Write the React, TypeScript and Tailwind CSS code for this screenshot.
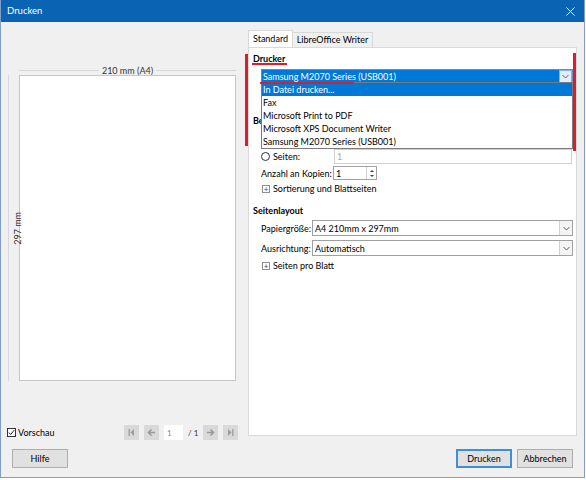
import React from "react";

const font = "font-['Lato','Noto_Sans',sans-serif]";

function Chevron({ className = "" }: { className?: string }) {
  return (
    <svg width="7" height="5" viewBox="0 0 7 5" className={className}>
      <path d="M0.5 1 L3.5 4 L6.5 1" fill="none" stroke="#606060" strokeWidth="1" />
    </svg>
  );
}

function Select({ value, width }: { value: string; width: string }) {
  return (
    <div className={`flex h-[16px] ${width} items-center border border-[#a0a0a0] bg-white`}>
      <span className="flex-1 truncate pl-[2px] leading-none">{value}</span>
      <div className="flex h-full w-[13px] items-center justify-center border-l border-[#d0d0d0] bg-[#f4f4f4]">
        <Chevron />
      </div>
    </div>
  );
}

function Expander({ label }: { label: string }) {
  return (
    <div className="flex items-center gap-[3px]">
      <div className="flex h-[8px] w-[8px] items-center justify-center border border-[#909090] bg-white">
        <span className="text-[8px] leading-none text-[#404040]">+</span>
      </div>
      <span className="leading-none">{label}</span>
    </div>
  );
}

function NavButton({ kind }: { kind: "first" | "prev" | "next" | "last" }) {
  return (
    <div className="flex h-[15px] w-[15px] items-center justify-center bg-[#d9d9d9]">
      <svg width="9" height="9" viewBox="0 0 9 9">
        {kind === "first" && (
          <>
            <rect x="1.5" y="1" width="1.3" height="7" fill="#9a9a9a" />
            <path d="M7 1 L3.5 4.5 L7 8 Z" fill="#9a9a9a" />
          </>
        )}
        {kind === "last" && (
          <>
            <rect x="6.2" y="1" width="1.3" height="7" fill="#9a9a9a" />
            <path d="M2 1 L5.5 4.5 L2 8 Z" fill="#9a9a9a" />
          </>
        )}
        {kind === "prev" && (
          <path d="M8 4.5 H1.5 M4.5 1.5 L1.5 4.5 L4.5 7.5" fill="none" stroke="#9a9a9a" strokeWidth="1.6" />
        )}
        {kind === "next" && (
          <path d="M1 4.5 H7.5 M4.5 1.5 L7.5 4.5 L4.5 7.5" fill="none" stroke="#9a9a9a" strokeWidth="1.6" />
        )}
      </svg>
    </div>
  );
}

export default function App() {
  const printers = [
    "In Datei drucken...",
    "Fax",
    "Microsoft Print to PDF",
    "Microsoft XPS Document Writer",
    "Samsung M2070 Series (USB001)",
  ];

  return (
    <div className={`h-[480px] w-[586px] whitespace-nowrap bg-white text-[9px] text-black ${font}`}>
      <div className="flex h-[478px] w-[585px] flex-col border-x border-b border-[#7f9fc9]">
        {/* title bar */}
        <div className="flex h-[22px] items-center justify-between bg-[#0a63b3] pl-[6px] pr-[9px] text-white">
          <span className="text-[9.5px]">Drucken</span>
          <svg width="9" height="9" viewBox="0 0 9 9">
            <path d="M0.5 0.5 L8.5 8.5 M8.5 0.5 L0.5 8.5" stroke="#fff" strokeWidth="1" />
          </svg>
        </div>

        <div className="flex flex-1 flex-col bg-[#f0f0f0]">
          <div className="flex h-[418px]">
            {/* preview column */}
            <div className="flex w-[247px] flex-col pt-[43px]">
              <div className="ml-[18px] flex h-[10px] w-[217px] items-center">
                <div className="h-px flex-1 bg-[#d8d8d8]" />
                <span className="px-[3px] leading-none text-[#333]">210 mm (A4)</span>
                <div className="h-px flex-1 bg-[#d8d8d8]" />
              </div>
              <div className="flex h-[306px]">
                <div className="ml-[7px] flex w-[18px] items-center justify-center border-l border-[#d8d8d8]">
                  <span className="rotate-180 leading-none text-[#333] [writing-mode:vertical-rl]">297 mm</span>
                </div>
                <div className="ml-[-7px] w-[217px] border border-[#c6c6c6] bg-white" />
              </div>
              <div className="mt-auto flex h-[15px] items-center pl-[6px]">
                <div className="flex w-[117px] items-center gap-[2px]">
                  <div className="flex h-[9px] w-[9px] items-center justify-center border border-[#333] bg-white">
                    <svg width="7" height="7" viewBox="0 0 7 7">
                      <path d="M0.8 3.6 L2.7 5.5 L6.2 1.2" fill="none" stroke="#222" strokeWidth="1" />
                    </svg>
                  </div>
                  <span className="leading-none">Vorschau</span>
                </div>
                <div className="flex items-center">
                  <NavButton kind="first" />
                  <div className="ml-[5px]">
                    <NavButton kind="prev" />
                  </div>
                  <div className="ml-[5px] flex h-[15px] w-[19px] items-center bg-white pl-[3px] text-[8px] text-[#888]">1</div>
                  <span className="ml-[5px] w-[15px] text-[8px] leading-none text-[#333]">/ 1</span>
                  <NavButton kind="next" />
                  <div className="ml-[5px]">
                    <NavButton kind="last" />
                  </div>
                </div>
              </div>
            </div>

            {/* right tab column */}
            <div className="flex flex-col pt-[8px]">
              <div className="flex h-[17px] items-end">
                <div className="flex h-[17px] w-[45px] items-center justify-center border-x border-t border-[#d9d9d9] bg-white">
                  Standard
                </div>
                <div className="flex h-[15px] w-[80px] items-center justify-center border-r border-t border-[#d9d9d9] bg-[#f0f0f0]">
                  LibreOffice Writer
                </div>
              </div>
              <div className="relative flex h-[389px] w-[329px] flex-col border border-t border-[#d9d9d9] bg-white pl-[4px]">
                <div className="pt-[5px] font-bold leading-[12px]">Drucker</div>
                <div className="ml-[8px] mt-[4px] flex h-[15px] w-[312px] items-center border border-[#5a8fc8] bg-[#0078d7]">
                  <span className="flex-1 pl-[1px] leading-none text-white">Samsung M2070 Series (USB001)</span>
                  <div className="flex h-full w-[13px] items-center justify-center border border-[#7fb4e6] bg-[#e3eefa]">
                    <Chevron />
                  </div>
                </div>

                <div className="mt-[31px] font-bold leading-[12px]">Bereich und Kopien</div>
                <div className="h-[20px]" />
                <div className="ml-[8px] mt-[2px] flex h-[15px] items-center">
                  <div className="flex w-[73px] items-center gap-[3px]">
                    <div className="h-[9px] w-[9px] rounded-full border border-[#333] bg-white" />
                    <span className="leading-none">Seiten:</span>
                  </div>
                  <div className="flex h-[15px] w-[238px] items-center border border-[#d0d0d0] pl-[2px] text-[#aaa]">1</div>
                </div>
                <div className="ml-[8px] mt-[2px] flex h-[14px] items-center">
                  <span className="w-[72px] leading-none">Anzahl an Kopien:</span>
                  <div className="flex h-[14px] w-[44px] items-center border border-[#a0a0a0]">
                    <span className="flex-1 pl-[2px] leading-none">1</span>
                    <div className="flex h-full w-[10px] flex-col items-center justify-center gap-[3px] border-l border-[#d0d0d0]">
                      <div className="h-0 w-0 border-x-[2px] border-b-[2px] border-x-transparent border-b-[#444]" />
                      <div className="h-0 w-0 border-x-[2px] border-t-[2px] border-x-transparent border-t-[#444]" />
                    </div>
                  </div>
                </div>
                <div className="ml-[9px] mt-[4px]">
                  <Expander label="Sortierung und Blattseiten" />
                </div>

                <div className="mt-[12px] font-bold leading-[12px]">Seitenlayout</div>
                <div className="ml-[8px] mt-[3px] flex items-center">
                  <span className="w-[51px] leading-none">Papiergröße:</span>
                  <Select value="A4 210mm x 297mm" width="w-[261px]" />
                </div>
                <div className="ml-[8px] mt-[4px] flex items-center">
                  <span className="w-[51px] leading-none">Ausrichtung:</span>
                  <Select value="Automatisch" width="w-[261px]" />
                </div>
                <div className="ml-[9px] mt-[5px]">
                  <Expander label="Seiten pro Blatt" />
                </div>

                {/* open printer list */}
                <div className="absolute left-[12px] top-[34px] w-[312px] border border-[#7a7a7a] bg-white">
                  {printers.map((p, i) => (
                    <div
                      key={p}
                      className={`flex h-[13px] items-center pl-[1px] leading-none ${
                        i === 0 ? "bg-[#0078d7] text-white" : ""
                      }`}
                    >
                      {p}
                    </div>
                  ))}
                </div>

                {/* red annotations */}
                <div className="absolute left-[-4px] top-[6px] h-[92px] w-[3px] bg-[#d9202a]" />
                <div className="absolute left-[324px] top-[5px] h-[98px] w-[3px] bg-[#d9202a]" />
                <div className="absolute left-[3px] top-[15px] h-[2px] w-[35px] bg-[#d9202a]" />
                <div className="absolute left-[11px] top-[34px] h-[2px] w-[94px] bg-[#d9202a]" />
              </div>
            </div>
          </div>

          {/* bottom buttons */}
          <div className="mt-[9px] flex items-center pl-[11px] pr-[11px]">
            <div className="flex h-[19px] w-[56px] items-center justify-center border border-[#adadad] bg-[#e1e1e1]">Hilfe</div>
            <div className="ml-auto flex h-[19px] w-[56px] items-center justify-center border-2 border-[#3d8fd6] bg-[#e1e1e1]">
              Drucken
            </div>
            <div className="ml-[5px] flex h-[19px] w-[56px] items-center justify-center border border-[#adadad] bg-[#e1e1e1]">
              Abbrechen
            </div>
          </div>
        </div>
      </div>
    </div>
  );
}
